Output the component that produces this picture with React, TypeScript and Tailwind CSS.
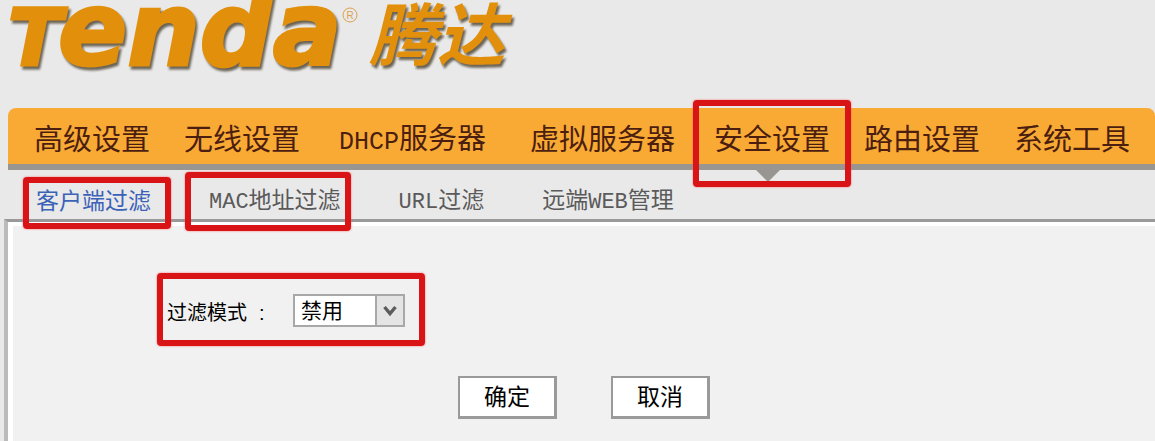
import clsx from "clsx";
import type { ReactNode } from "react";

interface NavItem {
  latin?: string;
  label: string;
  wide?: boolean;
  active?: boolean;
}

interface SubItem {
  before?: string;
  latin?: string;
  label: string;
  active?: boolean;
  marked?: string;
}

const navItems: NavItem[] = [
  { label: "高级设置" },
  { label: "无线设置" },
  { latin: "DHCP", label: "服务器", wide: true },
  { label: "虚拟服务器", wide: true },
  { label: "安全设置", active: true },
  { label: "路由设置" },
  { label: "系统工具" },
];

const subItems: SubItem[] = [
  { label: "客户端过滤", active: true, marked: "-left-[13px] -right-5 top-[7px] h-[52px]" },
  { latin: "MAC", label: "地址过滤", marked: "-left-6 -right-[10px] top-[2px] h-[59px]" },
  { latin: "URL", label: "过滤" },
  { before: "远端", latin: "WEB", label: "管理" },
];

export default function App() {
  return (
    <div className="flex min-h-screen flex-col overflow-hidden bg-[#e9e9e9] font-['Liberation_Sans','Noto_Sans_CJK_SC',sans-serif]">
      <header className="h-[108px]">
        <Logo />
      </header>

      <nav className="ml-2 flex h-[62px] rounded-t-lg border-b-6 border-[#999590] bg-[#f9aa35] pl-[9px] text-[29px] text-[#4c1e10]">
        {navItems.map((item) => (
          <a
            key={item.label}
            href="#"
            className={clsx(
              "relative flex items-center pt-2 leading-none whitespace-nowrap",
              item.wide ? "px-[22px]" : "px-[17px]",
            )}
          >
            <span>
              {item.latin && <Latin className="text-[25px]">{item.latin}</Latin>}
              {item.label}
            </span>
            {item.active && (
              <>
                <svg
                  viewBox="0 0 24 12"
                  className="absolute top-full left-1/2 mt-1.5 h-3 w-6 -translate-x-4"
                  fill="#999590"
                >
                  <path d="M0 0H24L12 12Z" />
                </svg>
                <Marker className="-top-2 -right-1 -left-1 h-[87px]" />
              </>
            )}
          </a>
        ))}
      </nav>

      <nav className="flex h-[49px] gap-[58px] pl-9 text-[23px] text-[#5a5a5a]">
        {subItems.map((item) => (
          <a
            key={item.label}
            href="#"
            className={clsx(
              "relative flex items-center pt-3.5 leading-none whitespace-nowrap",
              item.active && "text-[#3c62b8]",
            )}
          >
            <span>
              {item.before}
              {item.latin && <Latin className="text-[22px]">{item.latin}</Latin>}
              {item.label}
            </span>
            {item.marked && <Marker className={item.marked} />}
          </a>
        ))}
      </nav>

      <main className="ml-1 flex flex-1 flex-col border-t-3 border-l-4 border-t-[#999] border-l-[#bbb]">
        <form
          className="flex-1 border-t-4 border-l-5 border-white bg-[#f1f1f1] pt-[68px] text-black"
          onSubmit={(e) => e.preventDefault()}
        >
          <div className="relative ml-[154px] flex w-fit items-center">
            <label htmlFor="mode" className="w-[126px] pt-1 text-xl leading-none whitespace-nowrap">
              过滤模式<span className="ml-3">:</span>
            </label>
            <div className="relative">
              <select
                id="mode"
                defaultValue="off"
                className="block h-[33px] w-28 appearance-none border-2 border-[#a8a8a8] bg-white pl-[6px] text-[21px] leading-none"
              >
                <option value="off">禁用</option>
                <option value="allow">仅允许</option>
                <option value="deny">仅禁止</option>
              </select>
              <span className="pointer-events-none absolute inset-y-0 right-0 flex w-[30px] items-center justify-center border-2 border-[#a8a8a8] bg-[#e4e4e4]">
                <svg viewBox="0 0 14 12" className="h-3 w-3.5" fill="none" stroke="#5c5c5c" strokeWidth="3.4">
                  <path d="M1.5 2L7 8.5L12.5 2" />
                </svg>
              </span>
            </div>
            <Marker className="-top-[21px] -right-5 -left-[10px] h-[73px]" />
          </div>

          <div className="mt-[49px] flex justify-center gap-[54px]">
            <FormButton type="submit">确定</FormButton>
            <FormButton type="reset">取消</FormButton>
          </div>
        </form>
      </main>
    </div>
  );
}

function Logo() {
  return (
    <svg
      viewBox="0 0 530 108"
      className="h-[108px] w-[530px]"
      role="img"
      aria-label="Tenda 腾达"
    >
      <g
        fill="#e2900c"
        className="font-['DejaVu_Sans'] font-bold italic [filter:drop-shadow(2px_3px_1px_#6b6456)]"
      >
        <g stroke="#e2900c" strokeWidth="3">
          <text x="8" y="65" fontSize="79">T</text>
          <text x="58" y="65" fontSize="102">enda</text>
        </g>
        <text x="369" y="60" fontSize="68" className="font-['Noto_Sans_CJK_SC']">
          腾达
        </text>
      </g>
      <circle cx="350" cy="15" r="7" fill="none" stroke="#dba14e" />
      <text x="350" y="19" fontSize="10" textAnchor="middle" fill="#dba14e">R</text>
    </svg>
  );
}

function Latin({ className, children }: { className: string; children: ReactNode }) {
  return <span className={clsx("font-['Liberation_Mono']", className)}>{children}</span>;
}

// Red frame around the controls to look at
function Marker({ className }: { className: string }) {
  return (
    <span
      className={clsx(
        "pointer-events-none absolute z-10 rounded-sm border-6 border-[#d81416] shadow-[0_0_2px_#ff6060]",
        className,
      )}
    />
  );
}

function FormButton({ type, children }: { type: "submit" | "reset"; children: ReactNode }) {
  return (
    <button
      type={type}
      className="h-[43px] w-[99px] border-2 border-r-3 border-b-3 border-[#9a9a9a] bg-white text-[23px] leading-none"
    >
      {children}
    </button>
  );
}
